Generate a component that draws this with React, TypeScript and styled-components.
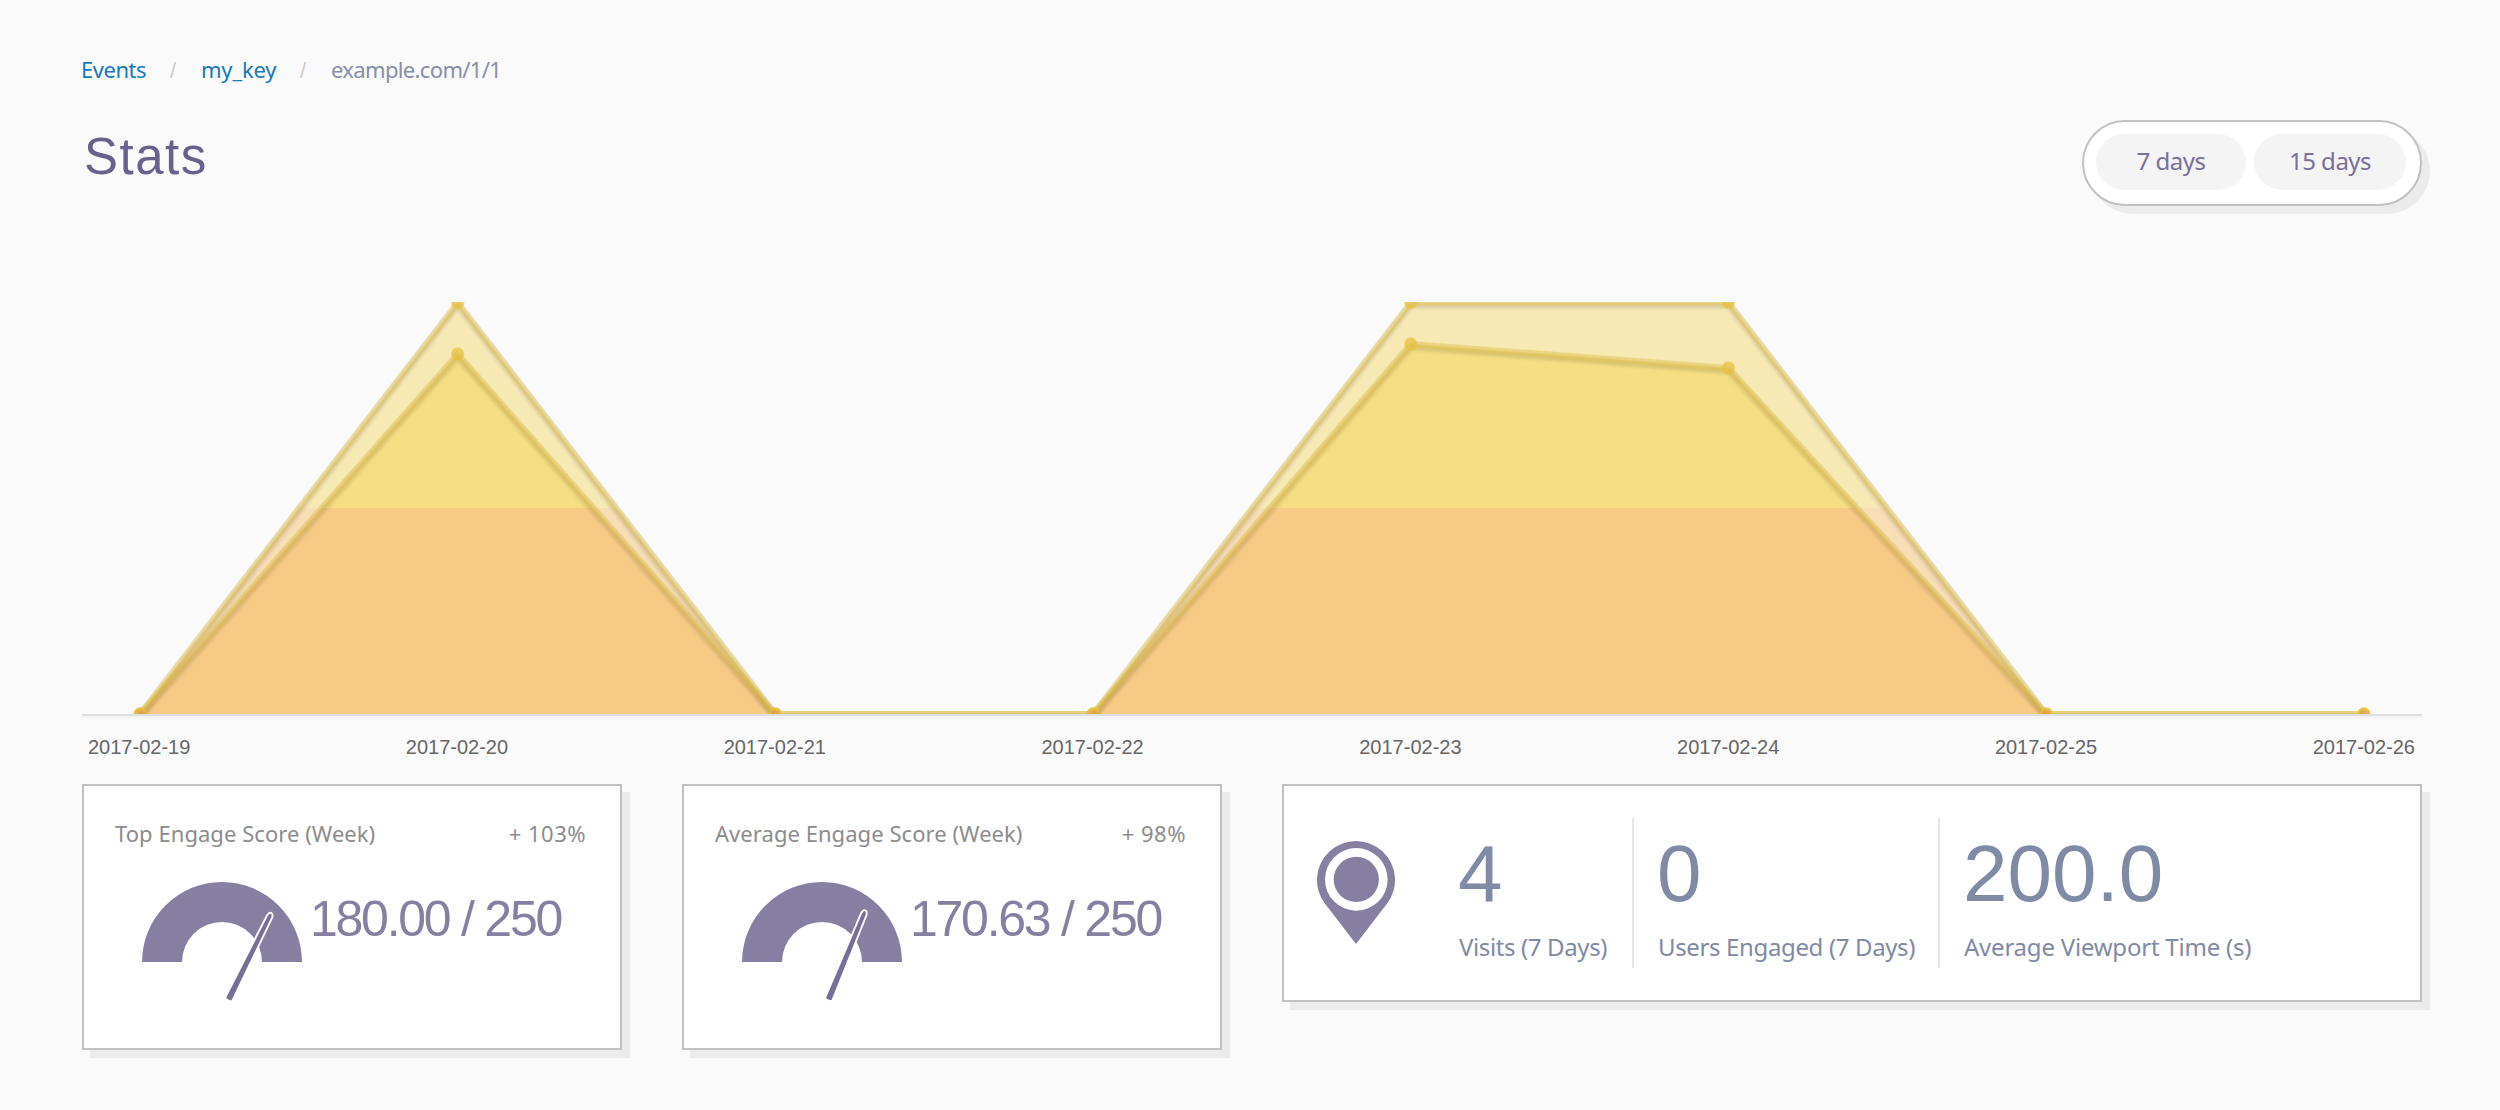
import React from "react";
import styled, { createGlobalStyle } from "styled-components";

const humanist = `"Noto Sans", "Open Sans", sans-serif`;
const grotesk = `"Liberation Sans", Arial, sans-serif`;

const colors = {
  page: "#fafafa",
  border: "#c1c1c1",
  shadow: "#ebebeb",
  link: "#1779ba",
  muted: "#868fa9",
  title: "#69618c",
  purple: "#867fa1",
  needle: "#776f97",
  slate: "#7f8aa4",
  label: "#8c8c8c",
  axis: "#dedfe0",
};

const GlobalStyle = createGlobalStyle`
  * { box-sizing: border-box; }
  body { margin: 0; background: ${colors.page}; }
`;

const Page = styled.main`
  display: flex;
  flex-direction: column;
  width: 2500px;
  height: 1110px;
  padding: 54px 78px 0 82px;
  background: ${colors.page};
  font-family: ${humanist};
  overflow: hidden;
`;

const Breadcrumbs = styled.nav`
  display: flex;
  align-items: center;
  height: 30px;
  margin-left: -1px;
  font-size: 22px;
  line-height: 30px;
`;

const Crumb = styled.span<{ $link?: boolean; $width: number; $tracking: number }>`
  width: ${(p) => p.$width}px;
  color: ${(p) => (p.$link ? colors.link : colors.muted)};
  letter-spacing: ${(p) => p.$tracking}px;
  white-space: nowrap;
`;

const Slash = styled.span<{ $width: number }>`
  width: ${(p) => p.$width}px;
  padding-top: 3px;
  color: #cacaca;
  font-family: ${grotesk};
  font-size: 22px;
`;

const Header = styled.header`
  display: flex;
  justify-content: space-between;
  align-items: flex-start;
  height: 86px;
  margin-top: 36px;
`;

const Title = styled.h1`
  margin: 0;
  padding: 7px 0 0 2px;
  color: ${colors.title};
  font-family: ${grotesk};
  font-size: 51px;
  font-weight: 400;
  line-height: 60px;
  letter-spacing: 1.5px;
`;

const RangeToggle = styled.div`
  display: flex;
  gap: 8px;
  height: 86px;
  padding: 12px 14px 0 12px;
  border: 2px solid ${colors.border};
  border-radius: 43px;
  background: #fff;
  box-shadow: 8px 8px 0 ${colors.shadow};
`;

const RangeButton = styled.button<{ $width: number }>`
  width: ${(p) => p.$width}px;
  height: 56px;
  padding: 0 0 2px;
  border: 0;
  border-radius: 28px;
  background: #f4f4f4;
  color: #79709a;
  font-family: ${humanist};
  font-size: 24px;
  line-height: 54px;
  letter-spacing: -0.5px;
`;

const ChartSection = styled.section`
  display: flex;
  flex-direction: column;
  width: 2340px;
  margin-top: 96px;
`;

const Plot = styled.svg`
  display: block;
  width: 2340px;
  height: 412px;
`;

const Axis = styled.div`
  height: 2px;
  background: ${colors.axis};
  box-shadow: 0 2px 3px rgba(0, 0, 0, 0.06);
`;

const DateRow = styled.div`
  display: flex;
  justify-content: space-between;
  margin-top: 19px;
  padding: 0 7px 0 6px;
  color: #666;
  font-family: ${grotesk};
  font-size: 20px;
  line-height: 24px;
`;

const Cards = styled.section`
  display: flex;
  align-items: flex-start;
  gap: 60px;
  margin-top: 25px;
`;

const Card = styled.article<{ $width: number; $height: number }>`
  display: flex;
  flex: none;
  width: ${(p) => p.$width}px;
  height: ${(p) => p.$height}px;
  border: 2px solid ${colors.border};
  background: #fff;
  box-shadow: 8px 8px 0 ${colors.shadow};
`;

const ScoreBody = styled.div`
  display: flex;
  flex: 1;
  flex-direction: column;
  padding: 32px 34px 0 31px;
`;

const ScoreHead = styled.div`
  display: flex;
  justify-content: space-between;
  color: ${colors.label};
  font-size: 22px;
  line-height: 30px;
`;

const ScoreLabel = styled.span<{ $tracking: number }>`
  letter-spacing: ${(p) => p.$tracking}px;
`;

const ScoreRow = styled.div`
  display: flex;
  align-items: flex-start;
  margin-top: 34px;
  padding-left: 27px;
`;

const GaugeSvg = styled.svg`
  flex: none;
  width: 160px;
  height: 122px;
`;

const ScoreValue = styled.div`
  margin: 7px 0 0 8px;
  color: ${colors.purple};
  font-family: ${grotesk};
  font-size: 50px;
  line-height: 60px;
  letter-spacing: -2.25px;
  white-space: nowrap;
`;

const VisitsBody = styled.div`
  display: flex;
  padding: 32px 0 0 33px;
`;

const PinSvg = styled.svg`
  flex: none;
  width: 78px;
  height: 104px;
  margin: 22px 40px 0 0;
`;

const Metric = styled.div<{ $width: number; $last?: boolean }>`
  width: ${(p) => p.$width}px;
  height: 150px;
  padding: 11px 0 0 24px;
  border-right: ${(p) => (p.$last ? "0" : "2px solid #e6e6e6")};
  color: ${colors.slate};
  white-space: nowrap;
`;

const MetricValue = styled.div`
  margin-left: -1px;
  font-family: ${grotesk};
  font-size: 80px;
  line-height: 90px;
`;

const MetricLabel = styled.div<{ $tracking: number }>`
  margin-top: 12px;
  font-size: 24px;
  line-height: 32px;
  letter-spacing: ${(p) => p.$tracking}px;
`;

const days = [
  "2017-02-19",
  "2017-02-20",
  "2017-02-21",
  "2017-02-22",
  "2017-02-23",
  "2017-02-24",
  "2017-02-25",
  "2017-02-26",
];
const topY = [412, 0.5, 412, 412, 0.5, 0.5, 412, 412];
const averageY = [412, 52, 412, 412, 42, 66, 412, 412];
const xAt = (i: number) => 58 + i * 317.7;

function Series({ ys }: { ys: number[] }) {
  const points = ys.map((y, i) => `${xAt(i)},${y}`).join(" ");
  return (
    <g>
      <polygon points={points} fill="url(#zones)" />
      <g filter="url(#drop)">
        <polyline
          points={points}
          fill="none"
          stroke="#e0be48"
          strokeOpacity="0.45"
          strokeWidth="6"
          strokeLinejoin="round"
        />
      </g>
      {ys.map((y, i) => (
        <circle
          key={i}
          cx={xAt(i)}
          cy={y}
          r="5.2"
          fill={y === 412 ? "#e0983c" : "#e4bc3a"}
          fillOpacity="0.5"
          stroke="#eac23a"
          strokeOpacity="0.6"
          strokeWidth="3"
        />
      ))}
    </g>
  );
}

function Chart() {
  return (
    <ChartSection>
      <Plot viewBox="0 0 2340 412">
        <defs>
          <linearGradient id="zones" gradientUnits="userSpaceOnUse" x1="0" y1="0" x2="0" y2="412">
            <stop offset="0.5" stopColor="rgb(242,193,9)" stopOpacity="0.29" />
            <stop offset="0.5" stopColor="rgb(244,153,14)" stopOpacity="0.29" />
          </linearGradient>
          <filter
            id="drop"
            filterUnits="userSpaceOnUse"
            x="0"
            y="-20"
            width="2340"
            height="460"
            colorInterpolationFilters="sRGB"
          >
            <feDropShadow dx="0" dy="3" stdDeviation="1.5" floodColor="#000" floodOpacity="0.25" />
          </filter>
        </defs>
        <Series ys={topY} />
        <Series ys={averageY} />
      </Plot>
      <Axis />
      <DateRow>
        {days.map((d) => (
          <span key={d}>{d}</span>
        ))}
      </DateRow>
    </ChartSection>
  );
}

function Gauge({ angle }: { angle: number }) {
  return (
    <GaugeSvg viewBox="0 0 160 122">
      <path d="M0 80A80 80 0 0 1 160 80H120A40 40 0 0 0 40 80Z" fill={colors.purple} />
      <path
        transform={`translate(86.6 117.5) rotate(${angle})`}
        d="M-2.9 -1.5L-1.9 -92Q-1.6 -95.5 0 -95.5Q1.6 -95.5 1.9 -92L2.9 -1.5Q2.9 0 1.6 0H-1.6Q-2.9 0 -2.9 -1.5Z"
        fill={colors.needle}
        stroke="#fff"
        strokeWidth="3.8"
        paintOrder="stroke"
      />
    </GaugeSvg>
  );
}

interface ScoreProps {
  label: string;
  change: string;
  value: string;
  angle: number;
}

function ScoreCard({ label, change, value, angle }: ScoreProps) {
  return (
    <Card $width={540} $height={266}>
      <ScoreBody>
        <ScoreHead>
          <ScoreLabel $tracking={0.05}>{label}</ScoreLabel>
          <ScoreLabel $tracking={0.5}>{change}</ScoreLabel>
        </ScoreHead>
        <ScoreRow>
          <Gauge angle={angle} />
          <ScoreValue>{value}</ScoreValue>
        </ScoreRow>
      </ScoreBody>
    </Card>
  );
}

function Pin() {
  return (
    <PinSvg viewBox="0 0 78 104">
      <path d="M39 104L8.1 63.8A39 39 0 1 1 69.9 63.8Z" fill={colors.purple} />
      <circle cx="39.3" cy="39.4" r="31.3" fill="#fff" />
      <circle cx="39.3" cy="39.4" r="22.6" fill={colors.purple} />
    </PinSvg>
  );
}

export default function App() {
  return (
    <>
      <GlobalStyle />
      <Page>
        <Breadcrumbs>
          <Crumb $link $width={89} $tracking={-0.45}>Events</Crumb>
          <Slash $width={31}>/</Slash>
          <Crumb $link $width={99} $tracking={-0.2}>my_key</Crumb>
          <Slash $width={31}>/</Slash>
          <Crumb $width={200} $tracking={-0.65}>example.com/1/1</Crumb>
        </Breadcrumbs>
        <Header>
          <Title>Stats</Title>
          <RangeToggle>
            <RangeButton $width={150}>7 days</RangeButton>
            <RangeButton $width={152}>15 days</RangeButton>
          </RangeToggle>
        </Header>
        <Chart />
        <Cards>
          <ScoreCard label="Top Engage Score (Week)" change="+ 103%" value="180.00 / 250" angle={26.3} />
          <ScoreCard label="Average Engage Score (Week)" change="+ 98%" value="170.63 / 250" angle={22.4} />
          <Card $width={1140} $height={218}>
            <VisitsBody>
              <Pin />
              <Metric $width={199}>
                <MetricValue>4</MetricValue>
                <MetricLabel $tracking={-0.38}>Visits (7 Days)</MetricLabel>
              </Metric>
              <Metric $width={306}>
                <MetricValue>0</MetricValue>
                <MetricLabel $tracking={-0.36}>Users Engaged (7 Days)</MetricLabel>
              </Metric>
              <Metric $width={400} $last>
                <MetricValue>200.0</MetricValue>
                <MetricLabel $tracking={-0.22}>Average Viewport Time (s)</MetricLabel>
              </Metric>
            </VisitsBody>
          </Card>
        </Cards>
      </Page>
    </>
  );
}
